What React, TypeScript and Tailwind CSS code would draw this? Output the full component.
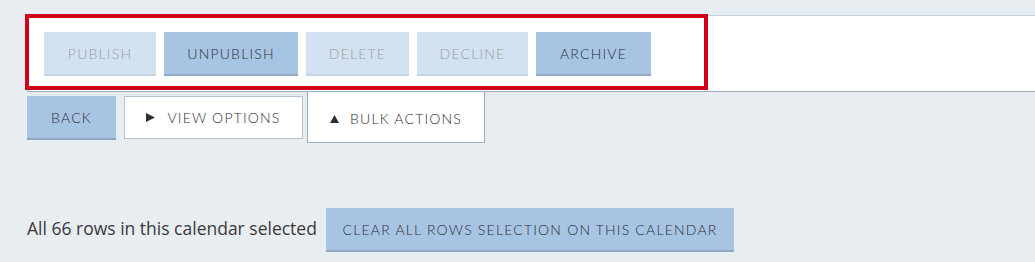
import React from 'react';

const font = { fontFamily: 'Lato, "Liberation Sans", sans-serif' };

type ActionProps = { label: string; width: string; disabled?: boolean };

function ActionButton({ label, width, disabled }: ActionProps) {
  const cls = disabled
    ? 'bg-[#d2e2f1] border-[#c4d3e2] text-[#9c9c9c]'
    : 'bg-[#a7c5e3] border-[#8fa8c3] text-[#2e2e36]';
  return (
    <button
      className={`${width} ${cls} h-[44px] border-b-2 text-[14px] font-light tracking-[1.2px] uppercase flex items-center justify-center`}
      style={font}
    >
      {label}
    </button>
  );
}

function TriangleRight() {
  return (
    <svg width="9" height="9" viewBox="0 0 9 9" className="shrink-0">
      <path d="M0 0 L9 4.5 L0 9 Z" fill="#2f2f2f" />
    </svg>
  );
}

function TriangleUp() {
  return (
    <svg width="9" height="8" viewBox="0 0 9 8" className="shrink-0">
      <path d="M4.5 0 L9 8 L0 8 Z" fill="#2f2f2f" />
    </svg>
  );
}

export default function App() {
  return (
    <div className="w-[1035px] h-[262px] bg-[#e8edf2] pt-[15px] pl-[27px] overflow-hidden">
      <div className="relative">
        <div className="bg-white border-t border-l border-b border-t-[#c3cedb] border-l-[#b9c6d3] border-b-[#9badbf] pt-[16px] pb-[15px] pl-[16px] flex gap-2">
          <ActionButton label="Publish" width="w-[112px]" disabled />
          <ActionButton label="Unpublish" width="w-[134px]" />
          <ActionButton label="Delete" width="w-[103px]" disabled />
          <ActionButton label="Decline" width="w-[111px]" disabled />
          <ActionButton label="Archive" width="w-[115px]" />
        </div>
        <div className="absolute -left-[2px] -top-[1px] w-[683px] h-[76px] border-4 border-[#d0021b] pointer-events-none" />
      </div>

      <div className="flex items-start -mt-px">
        <button
          className="mt-[5px] w-[89px] h-[44px] bg-[#a7c5e3] border-b-2 border-[#8fa8c3] text-[14px] font-light tracking-[1.2px] text-[#2e2e36] flex items-center justify-center"
          style={font}
        >
          BACK
        </button>
        <button
          className="ml-2 mt-[5px] w-[179px] h-[43px] bg-white border border-[#b4c1cf] text-[14px] font-light tracking-[1.2px] text-[#2e2e36] flex items-center justify-center gap-[12px]"
          style={font}
        >
          <TriangleRight />
          VIEW OPTIONS
        </button>
        <button
          className="ml-1 w-[178px] h-[52px] bg-white border-l border-r border-b border-[#9badbf] text-[14px] font-light tracking-[1.2px] text-[#2e2e36] flex items-center justify-center gap-[11px] pt-[4px]"
          style={font}
        >
          <TriangleUp />
          BULK ACTIONS
        </button>
      </div>

      <div className="mt-[65px] flex items-center gap-[9px]">
        <span className="w-[290px] pb-[4px] text-[17.5px] text-[#3a3a3a] whitespace-nowrap" style={{ fontFamily: '"Open Sans", "Liberation Sans", sans-serif' }}>
          All 66 rows in this calendar selected
        </span>
        <button
          className="w-[408px] h-[44px] bg-[#a7c5e3] border-b-2 border-[#8fa8c3] text-[14px] font-light tracking-[1.2px] text-[#2e2e36] flex items-center justify-center"
          style={font}
        >
          CLEAR ALL ROWS SELECTION ON THIS CALENDAR
        </button>
      </div>
    </div>
  );
}
